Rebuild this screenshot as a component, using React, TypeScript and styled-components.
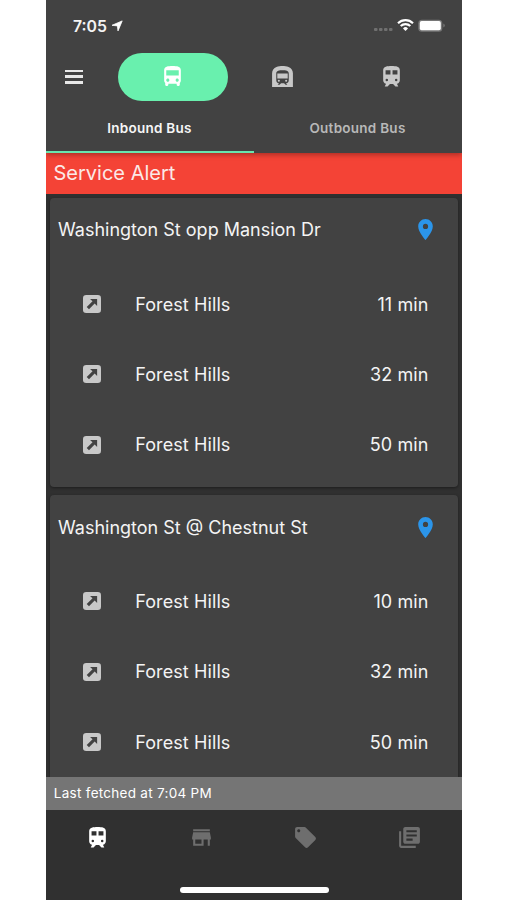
import React from 'react';
import styled, { createGlobalStyle } from 'styled-components';
import {
  MdDirectionsBus,
  MdLibraryBooks,
  MdLocalOffer,
  MdLocationOn,
  MdStore,
  MdSubway,
} from 'react-icons/md';

const GlobalStyle = createGlobalStyle`
  * { box-sizing: border-box; }
  body {
    margin: 0;
    background: #fff;
    font-family: Inter, Roboto, sans-serif;
  }
`;

const Screen = styled.div`
  width: 416px;
  height: 900px;
  margin-left: 46px;
  display: flex;
  flex-direction: column;
  overflow: hidden;
  background: #303030;
  color: #f4f4f4;
`;

const Header = styled.header`
  flex: none;
  height: 153px;
  background: #424242;
  position: relative;
  z-index: 1;
  box-shadow: 0 2px 5px rgba(0, 0, 0, 0.3);
`;

const StatusBar = styled.div`
  height: 52px;
  padding: 0 17px 0 27px;
  display: flex;
  align-items: center;
`;

const Clock = styled.span`
  padding-top: 1px;
  font-size: 15.8px;
  line-height: 20px;
  font-weight: 600;
`;

const LocationArrow = styled.svg`
  width: 12px;
  height: 12px;
  margin-left: 4px;
`;

const StatusIcons = styled.svg`
  width: 74px;
  height: 16px;
  margin-left: auto;
`;

const ModeBar = styled.nav`
  height: 49px;
  padding-left: 18px;
  display: flex;
  align-items: center;
`;

const MenuButton = styled.button`
  width: 20px;
  height: 14px;
  margin-right: 34px;
  padding: 0 1px 0 0.5px;
  border: 0;
  background: none;
  display: flex;
  flex-direction: column;
  justify-content: space-between;
`;

const MenuLine = styled.span`
  height: 2.5px;
  background: #e8e8e8;
`;

const ModeButton = styled.button<{ $active?: boolean }>`
  width: 109.5px;
  height: 48px;
  padding: 0;
  border: 0;
  border-radius: 24px;
  display: flex;
  align-items: center;
  justify-content: center;
  background: ${(p) => (p.$active ? '#69f0ae' : 'transparent')};
  color: ${(p) => (p.$active ? '#fff' : '#c8c8c8')};
  font-size: 25px;
`;

const Tabs = styled.div`
  height: 52px;
  display: flex;
`;

const Tab = styled.button<{ $active?: boolean }>`
  flex: 1;
  padding: 4px 1px 0 0;
  border: 0;
  border-bottom: 2px solid ${(p) => (p.$active ? '#69e5ae' : 'transparent')};
  background: none;
  color: ${(p) => (p.$active ? '#f6f6f6' : '#b8b8b8')};
  font: 600 13.5px/20px Inter, sans-serif;
  letter-spacing: 0.26px;
`;

const Alert = styled.div`
  flex: none;
  height: 40.5px;
  padding-left: 7.5px;
  background: #f44336;
  color: #fbe9e7;
  font-size: 20px;
  line-height: 41px;
`;

const StopList = styled.main`
  flex: 1;
  min-height: 0;
  overflow: hidden;
  padding: 4px 4px 0;
`;

const StopCard = styled.section`
  height: 289.3px;
  margin-bottom: 8px;
  border-radius: 4px;
  background: #424242;
  box-shadow: 0 1px 3px rgba(0, 0, 0, 0.4);
  font-size: 18px;
`;

const StopHeader = styled.div`
  height: 71.5px;
  padding: 0 20px 7px 8px;
  display: flex;
  align-items: center;
  justify-content: space-between;
`;

const Pin = styled(MdLocationOn)`
  color: #2b95ea;
  font-size: 25px;
`;

const Arrival = styled.div`
  height: 70.3px;
  padding: 0 29.5px 0 32.7px;
  display: flex;
  align-items: center;
  letter-spacing: 0.1px;
`;

const RouteIcon = styled.svg`
  width: 18px;
  height: 18px;
  fill: #c8c8c8;
`;

const Destination = styled.span`
  margin-left: 34.5px;
`;

const Minutes = styled.span`
  margin-left: auto;
`;

const FetchBar = styled.div`
  flex: none;
  height: 33px;
  padding-left: 7.8px;
  background: #757575;
  color: #fff;
  font-size: 13.5px;
  line-height: 33px;
  letter-spacing: 0.28px;
`;

const BottomBar = styled.footer`
  flex: none;
  height: 90px;
  display: flex;
  flex-direction: column;
  align-items: center;
`;

const BottomTabs = styled.div`
  width: 100%;
  height: 77px;
  display: flex;
`;

const BottomTab = styled.button<{ $active?: boolean }>`
  flex: 1;
  height: 55px;
  padding: 0 1px 0 0;
  border: 0;
  background: none;
  display: flex;
  align-items: center;
  justify-content: center;
  color: ${(p) => (p.$active ? '#fff' : '#6e6e6e')};
  font-size: 25px;
`;

const HomeIndicator = styled.div`
  width: 149px;
  height: 5.5px;
  border-radius: 3px;
  background: #fff;
`;

const TrainIcon = () => (
  <svg width="1em" height="1em" viewBox="0 0 24 24" fill="currentColor">
    <path d="M12 2c-4 0-8 .5-8 4v9.500C4 17.200 5.200 18.600 6.800 18.950L5.500 21.500h2.700l2.300-2.400h3l2.300 2.400h2.700l-1.300-2.550C18.800 18.600 20 17.200 20 15.500V6c0-3.500-3.580-4-8-4zM7.500 16.600a1.200 1.200 0 1 1 0-2.400 1.200 1.200 0 0 1 0 2.400zM11 10H6.300V6H11v4zm2 0V6h4.700v4H13zm3.500 6.600a1.200 1.200 0 1 1 0-2.400 1.200 1.200 0 0 1 0 2.400z" />
  </svg>
);

const stops = [
  { name: 'Washington St opp Mansion Dr', minutes: [11, 32, 50] },
  { name: 'Washington St @ Chestnut St', minutes: [10, 32, 50] },
];

export default function App() {
  return (
    <>
      <GlobalStyle />
      <Screen>
        <Header>
          <StatusBar>
            <Clock>7:05</Clock>
            <LocationArrow viewBox="0 0 12 12" fill="#fff" stroke="#fff" strokeWidth="0.8" strokeLinejoin="round">
              <path d="M11.200.9 7 10.900 6.400 5.900 1 5.300z" />
            </LocationArrow>
            <StatusIcons viewBox="0 0 74 16">
              <g fill="#707070">
                <rect x="3" y="10" width="3.500" height="3" rx="1" />
                <rect x="8" y="10" width="3.500" height="3" rx="1" />
                <rect x="13" y="10" width="3.500" height="3" rx="1" />
                <rect x="18" y="10" width="3.500" height="3" rx="1" />
              </g>
              <g fill="none" stroke="#fff" strokeWidth="2.100">
                <path d="M27 5.200a10.700 10.700 0 0 1 15 0" />
                <path d="M29.700 8.100a6.800 6.800 0 0 1 9.600 0" />
              </g>
              <path d="M34.500 13 32 10.400a3.500 3.500 0 0 1 5 0z" fill="#fff" />
              <rect x="47.300" y="1.700" width="24" height="12" rx="3.500" fill="#777" />
              <rect x="48.800" y="3.100" width="21" height="9.200" rx="1.800" fill="#fff" />
              <path d="M72.300 5.600a2.100 2.100 0 0 1 0 4z" fill="#777" />
            </StatusIcons>
          </StatusBar>
          <ModeBar>
            <MenuButton aria-label="Menu">
              <MenuLine />
              <MenuLine />
              <MenuLine />
            </MenuButton>
            <ModeButton $active aria-label="Bus"><MdDirectionsBus /></ModeButton>
            <ModeButton aria-label="Subway"><MdSubway /></ModeButton>
            <ModeButton aria-label="Train"><TrainIcon /></ModeButton>
          </ModeBar>
          <Tabs>
            <Tab $active>Inbound Bus</Tab>
            <Tab>Outbound Bus</Tab>
          </Tabs>
        </Header>
        <Alert>Service Alert</Alert>
        <StopList>
          {stops.map((stop) => (
            <StopCard key={stop.name}>
              <StopHeader>
                <span>{stop.name}</span>
                <Pin />
              </StopHeader>
              {stop.minutes.map((m) => (
                <Arrival key={m}>
                  <RouteIcon viewBox="0 0 51 51">
                    <rect width="51" height="51" rx="9" />
                    <path d="M20 11h20v20l-7-7L17 40.500 10.500 34 27 18z" fill="#424242" />
                  </RouteIcon>
                  <Destination>Forest Hills</Destination>
                  <Minutes>{m} min</Minutes>
                </Arrival>
              ))}
            </StopCard>
          ))}
        </StopList>
        <FetchBar>Last fetched at 7:04 PM</FetchBar>
        <BottomBar>
          <BottomTabs>
            <BottomTab $active aria-label="Transit"><TrainIcon /></BottomTab>
            <BottomTab aria-label="Stores"><MdStore /></BottomTab>
            <BottomTab aria-label="Offers"><MdLocalOffer /></BottomTab>
            <BottomTab aria-label="News"><MdLibraryBooks /></BottomTab>
          </BottomTabs>
          <HomeIndicator />
        </BottomBar>
      </Screen>
    </>
  );
}
